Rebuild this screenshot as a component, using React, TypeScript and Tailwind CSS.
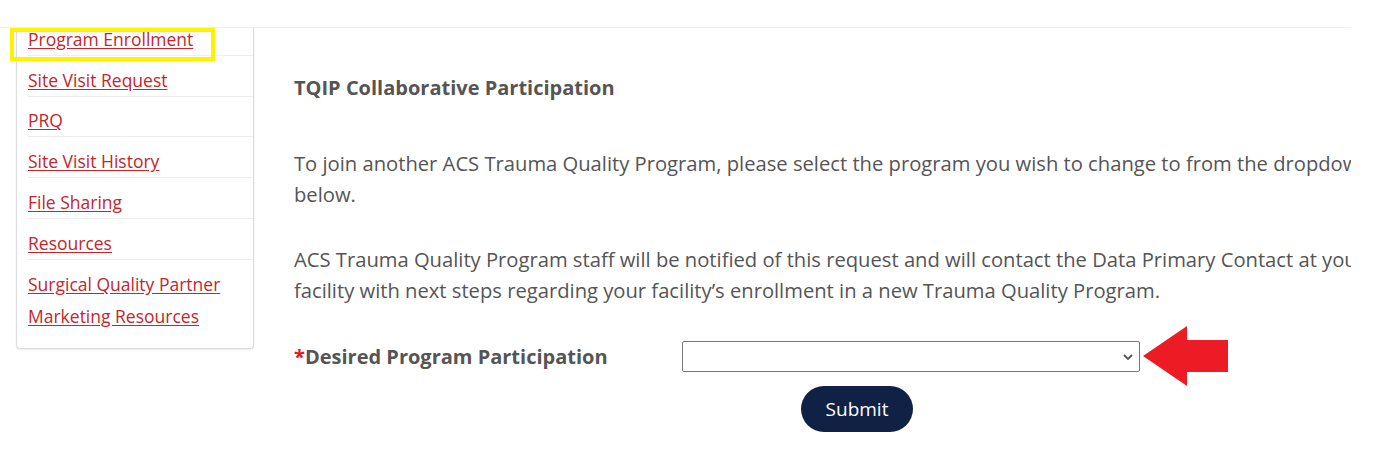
import React from "react";

const links = [
  "Program Enrollment",
  "Site Visit Request",
  "PRQ",
  "Site Visit History",
  "File Sharing",
  "Resources",
];

function LeftArrow() {
  return (
    <svg width="86" height="61" viewBox="0 0 86 61" className="shrink-0">
      <polygon points="0,30 44,0 44,14 85,14 85,46 44,46 44,60" fill="#ed1c24" />
    </svg>
  );
}

export default function App() {
  return (
    <div
      className="relative w-[1351px] h-[458px] overflow-hidden bg-white text-[#555555]"
      style={{ fontFamily: '"Open Sans", "Noto Sans", sans-serif' }}
    >
      {/* page header edge */}
      <div className="h-[28px] border-b border-[#f0f0f0]" />

      <div className="flex gap-[40px] h-[430px] overflow-hidden">
        {/* side navigation card */}
        <aside className="ml-[16px] w-[238px] shrink-0 self-start -mt-[13px] border-x border-b border-[#dcdcdc] rounded-b-[4px] shadow-[0_1px_2px_rgba(0,0,0,0.08)] bg-white">
          <ul className="pl-[11px] pb-[16px]">
            {links.map((l) => (
              <li
                key={l}
                className="pt-[7.8px] border-b border-[#eeeeee] text-[17.5px] leading-[32px]"
              >
                <a href="#" className="text-[#c1272d] underline underline-offset-2">
                  {l}
                </a>
              </li>
            ))}
            <li className="pt-[8px] text-[17.5px] leading-[32px]">
              <a href="#" className="text-[#c1272d] underline underline-offset-2">
                Surgical Quality Partner Marketing Resources
              </a>
            </li>
          </ul>
        </aside>

        {/* main form */}
        <main className="w-[1126px] shrink-0 pt-[44px] text-[20.2px] leading-[31px]">
          <h2 className="font-bold text-[20px] leading-[31px]">
            TQIP Collaborative Participation
          </h2>
          <p className="mt-[45px]">
            To join another ACS Trauma Quality Program, please select the program you wish to
            change to from the dropdown below.
          </p>
          <p className="mt-[34px]">
            ACS Trauma Quality Program staff will be notified of this request and will contact the
            Data Primary Contact at your facility with next steps regarding your facility’s
            enrollment in a new Trauma Quality Program.
          </p>

          <div className="mt-[19px] flex items-center h-[62px]">
            <label className="w-[388px] shrink-0 font-bold text-[20px]">
              <span className="text-[#e8151b]">*</span>Desired Program Participation
            </label>
            <div className="relative w-[458px] h-[31px] shrink-0 border border-[#767676] rounded-[2px] bg-white">
              <svg
                width="12"
                height="8"
                viewBox="0 0 12 8"
                className="absolute right-[5px] top-[11px]"
              >
                <path d="M2 2 L6 6 L10 2" fill="none" stroke="#555" strokeWidth="1.8" />
              </svg>
            </div>
            <div className="ml-[3px]">
              <LeftArrow />
            </div>
          </div>

          <div className="flex justify-center -mt-[1px]">
            <button className="w-[112px] h-[46px] rounded-full bg-[#0f2145] text-white text-[19px]">
              Submit
            </button>
          </div>
        </main>
      </div>

      {/* highlight frame around the first link */}
      <div className="absolute left-[10px] top-[28px] w-[205px] h-[33px] border-[4px] border-[#fff200]" />
    </div>
  );
}
